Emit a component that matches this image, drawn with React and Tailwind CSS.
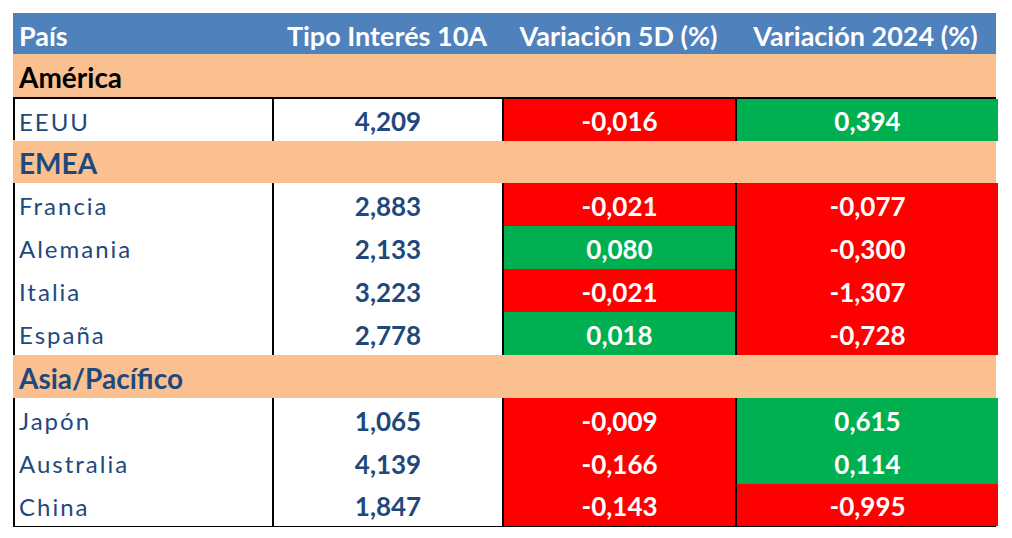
import React from 'react';

// Bond yields by region, Excel-style table
const GRID = 'grid grid-cols-[259px_230px_233px_261px]';
const RED = 'bg-[#FF0000]';
const GREEN = 'bg-[#00B050]';

const SECTIONS = [
  {
    name: 'América',
    color: 'text-black',
    rows: [['EEUU', '4,209', '-0,016', '0,394']],
  },
  {
    name: 'EMEA',
    color: 'text-[#1F497D]',
    rows: [
      ['Francia', '2,883', '-0,021', '-0,077'],
      ['Alemania', '2,133', '0,080', '-0,300'],
      ['Italia', '3,223', '-0,021', '-1,307'],
      ['España', '2,778', '0,018', '-0,728'],
    ],
  },
  {
    name: 'Asia/Pacífico',
    color: 'text-[#1F497D]',
    rows: [
      ['Japón', '1,065', '-0,009', '0,615'],
      ['Australia', '4,139', '-0,166', '0,114'],
      ['China', '1,847', '-0,143', '-0,995'],
    ],
  },
];

function ChangeCell({ value, last }) {
  const neg = value.startsWith('-');
  return (
    <div
      className={`flex items-center justify-center pt-[3px] font-bold text-white text-[26px] ${
        neg ? RED : GREEN
      } ${last ? '' : 'border-r-2 border-black'}`}
    >
      {value}
    </div>
  );
}

function DataRow({ row, first, last }) {
  const [country, rate, d5, ytd] = row;
  return (
    <div
      className={`${GRID} h-[43px] border-l-2 border-r-2 border-black ${first ? 'border-t-2' : ''} ${
        last ? 'border-b-2' : ''
      }`}
    >
      <div className="flex items-center pl-[4px] pt-[3px] text-[24px] tracking-[2px] text-[#1F497D] bg-white border-r-2 border-black">
        {country}
      </div>
      <div className="flex items-center justify-center pt-[3px] text-[26px] font-bold text-[#1F497D] bg-white border-r-2 border-black">
        {rate}
      </div>
      <ChangeCell value={d5} />
      <ChangeCell value={ytd} last />
    </div>
  );
}

export default function App() {
  const total = SECTIONS.reduce((n, s) => n + s.rows.length, 0);
  let idx = 0;
  return (
    <div className="w-[1012px] h-[538px] bg-white pt-[13px] pl-[13px] font-['Lato',sans-serif]">
      <div className="w-[983px]">
        {/* Header */}
        <div className={`${GRID} h-[41px] bg-[#4F81BD] text-white font-bold text-[27px]`}>
          <div className="flex items-center pl-[6px] pt-[3px]">País</div>
          <div className="flex items-center justify-center pt-[3px]">Tipo Interés 10A</div>
          <div className="flex items-center justify-center pt-[3px]">Variación 5D (%)</div>
          <div className="flex items-center justify-center pt-[3px]">Variación 2024 (%)</div>
        </div>

        {SECTIONS.map((s) => (
          <React.Fragment key={s.name}>
            <div
              className={`h-[43px] bg-[#FAC090] flex items-center pl-[6px] pt-[3px] font-bold text-[28px] ${s.color}`}
            >
              {s.name}
            </div>
            {s.rows.map((r, i) => {
              idx += 1;
              return (
                <DataRow
                  key={r[0]}
                  row={r}
                  first={s.name === 'América' && i === 0}
                  last={idx === total}
                />
              );
            })}
          </React.Fragment>
        ))}
      </div>
    </div>
  );
}
